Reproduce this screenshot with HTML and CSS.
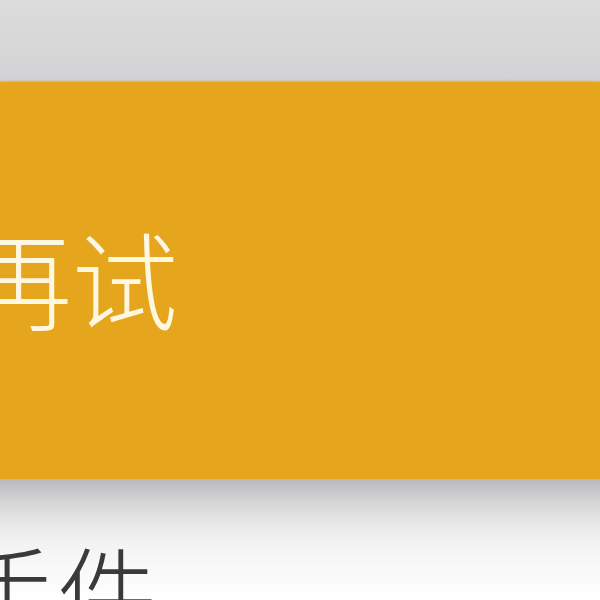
FILE: index.html
```html
<!DOCTYPE html>
<html lang="zh">
<head>
<meta charset="utf-8">
<link rel="stylesheet" href="styles.css">
</head>
<body>
<div class="page">
  <div class="topbar"></div>
  <div class="banner"><span class="banner-text">再试</span></div>
  <div class="lower">
    <div class="lower-text">手件</div>
  </div>
</div>
</body>
</html>
```
FILE: styles.css
```css
html, body {
  margin: 0;
  padding: 0;
  width: 600px;
  height: 600px;
  overflow: hidden;
  background: #ffffff;
  font-family: "Noto Sans CJK SC", "Noto Sans", sans-serif;
}
.page {
  display: flex;
  flex-direction: column;
  width: 600px;
  height: 600px;
  overflow: hidden;
}
.topbar {
  height: 82px;
  flex: none;
  background: linear-gradient(to bottom, #dcdcdc 0%, #d8d8d8 50%, #d2d1d5 100%);
}
.banner {
  height: 397px;
  flex: none;
  background: #e5a61d;
  display: flex;
  align-items: center;
  box-shadow: 0 -1px 2px rgba(200, 150, 40, 0.5);
}
.banner-text {
  color: #fff7e0;
  font-size: 106px;
  line-height: 1;
  margin-left: -34px;
  margin-top: -10px;
  font-weight: 300;
  white-space: nowrap;
}
.lower {
  flex: 1;
  min-height: 0;
  background: linear-gradient(to bottom, #b9b9bd 0px, #d4d4d4 22px, #e8e8e8 45px, #f3f3f3 65px, #f9f9f9 90px, #ffffff 121px);
  padding-top: 60px;
  overflow: hidden;
}
.lower-text {
  color: #3a3a3a;
  font-size: 100px;
  line-height: 1;
  margin-left: -43px;
  font-weight: 300;
  white-space: nowrap;
}
```
